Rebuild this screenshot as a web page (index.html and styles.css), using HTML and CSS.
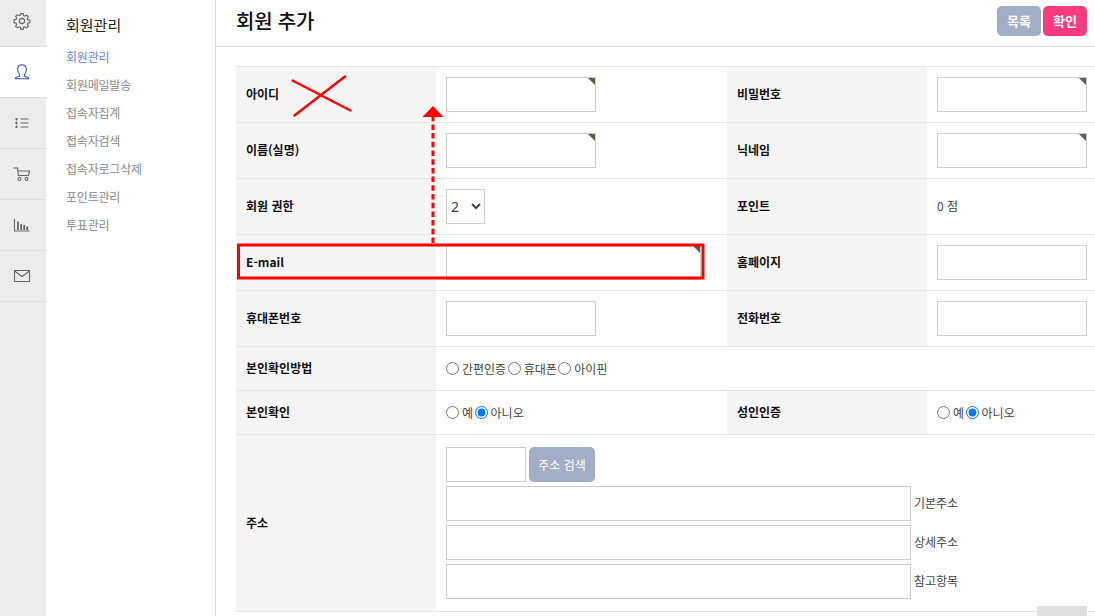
FILE: index.html
```html
<!DOCTYPE html>
<html lang="ko">
<head>
<meta charset="utf-8">
<title>회원 추가</title>
<link rel="stylesheet" href="styles.css">
</head>
<body>
<div class="app">
  <nav class="rail">
    <a class="rail-item"><svg class="ic" viewBox="0 0 16 16"><path d="M6.8.6h2.400l.4 2 1.300.6 1.800-1.100 1.700 1.700-1.100 1.800.6 1.300 2 .4v2.400l-2 .4-.6 1.300 1.100 1.800-1.700 1.700-1.800-1.100-1.300.6-.4 2H6.800l-.4-2-1.300-.6-1.800 1.100-1.700-1.700 1.100-1.800-.6-1.300-2-.4V6.800l2-.4.6-1.300-1.100-1.800 1.700-1.700 1.800 1.100 1.300-.6z"/><circle cx="8" cy="8" r="2.600"/></svg></a>
    <a class="rail-item active"><svg class="ic" viewBox="0 0 16 16"><path d="M5.500 10.500C3.800 8.500 3.400 6.800 3.700 4.800 4 2.200 6 .8 8 .8s4 1.400 4.300 4c.3 2-.1 3.700-1.800 5.700v1.700l3.500 1.200c.6.200.8.800.8 1.300H1.200c0-.5.2-1.100.8-1.300l3.500-1.200z"/></svg></a>
    <a class="rail-item"><svg class="ic" viewBox="0 0 16 16"><path d="M6.500 4h8M6.500 8h8M6.500 12h8"/><path class="dots" d="M1.500 3h2v2h-2zM2 5.500h1v1H2zM1.500 7h2v2h-2zM2 9.500h1v1H2zM1.500 11h2v2h-2z"/></svg></a>
    <a class="rail-item"><svg class="ic" viewBox="0 0 16 16"><path d="M-.5 2h4l1 8M3.800 5h11.700l-1 4.500h-10"/><circle cx="5.500" cy="13" r="1.500"/><circle cx="12.500" cy="13" r="1.500"/></svg></a>
    <a class="rail-item"><svg class="ic" viewBox="0 0 16 16"><path d="M.5 2v12h15"/><path class="dots" d="M3 4.500h1.800v8.500H3zM6.300 7h1.800v6H6.300zM9.300 8h1.800v5H9.300zM12.300 9.500h1.800V13h-1.800z"/></svg></a>
    <a class="rail-item"><svg class="ic" viewBox="0 0 16 16"><path d="M.5 2.500h15v11H.5zM.5 3l7.500 5.500L15.500 3"/></svg></a>
  </nav>
  <aside class="side">
    <h2 class="side-title">회원관리</h2>
    <ul class="side-list">
      <li class="current">회원관리</li>
      <li>회원메일발송</li>
      <li>접속자집계</li>
      <li>접속자검색</li>
      <li>접속자로그삭제</li>
      <li>포인트관리</li>
      <li>투표관리</li>
    </ul>
  </aside>
  <main class="main">
    <header class="head">
      <h1 class="title">회원 추가</h1>
      <div class="actions">
        <button class="btn gray" type="button">목록</button>
        <button class="btn pink" type="button">확인</button>
      </div>
    </header>
    <div class="body">
      <table class="form">
        <colgroup><col class="c-th"><col class="c-td"><col class="c-th"><col class="c-td2"></colgroup>
        <tr class="r56">
          <th>아이디</th>
          <td><span class="req"><input class="inp"></span></td>
          <th>비밀번호</th>
          <td><span class="req"><input class="inp"></span></td>
        </tr>
        <tr class="r56">
          <th>이름(실명)</th>
          <td><span class="req"><input class="inp"></span></td>
          <th>닉네임</th>
          <td><span class="req"><input class="inp"></span></td>
        </tr>
        <tr class="r56">
          <th>회원 권한</th>
          <td><select class="sel"><option>2</option></select></td>
          <th>포인트</th>
          <td class="txt">0 점</td>
        </tr>
        <tr class="r56">
          <th>E-mail</th>
          <td><span class="req"><input class="inp wide"></span></td>
          <th>홈페이지</th>
          <td><input class="inp"></td>
        </tr>
        <tr class="r56">
          <th>휴대폰번호</th>
          <td><input class="inp"></td>
          <th>전화번호</th>
          <td><input class="inp"></td>
        </tr>
        <tr class="r44">
          <th>본인확인방법</th>
          <td colspan="3" class="txt"><label class="opt"><input class="rad" type="radio" name="m">간편인증</label><label class="opt"><input class="rad" type="radio" name="m">휴대폰</label><label class="opt"><input class="rad" type="radio" name="m">아이핀</label></td>
        </tr>
        <tr class="r44">
          <th>본인확인</th>
          <td class="txt"><label class="opt"><input class="rad" type="radio" name="a">예</label><label class="opt"><input class="rad" type="radio" name="a" checked>아니오</label></td>
          <th>성인인증</th>
          <td class="txt"><label class="opt"><input class="rad" type="radio" name="b">예</label><label class="opt"><input class="rad" type="radio" name="b" checked>아니오</label></td>
        </tr>
        <tr>
          <th>주소</th>
          <td colspan="3" class="addr">
            <div class="addr-line"><input class="inp zip"><button class="btn-search" type="button">주소 검색</button></div>
            <div class="addr-line"><input class="inp long"><span class="addr-label">기본주소</span></div>
            <div class="addr-line"><input class="inp long"><span class="addr-label">상세주소</span></div>
            <div class="addr-line"><input class="inp long"><span class="addr-label">참고항목</span></div>
          </td>
        </tr>
      </table>
      <div class="tail"></div>
    </div>
  </main>
  <svg class="marks" width="1095" height="616" viewBox="0 0 1095 616">
    <path class="m-x" d="M292.500 80.500 350.500 110.500M345 76.500 294.500 115.500"/>
    <path class="m-box" d="M238.500 245h464.500v33H238.500z"/>
    <path class="m-dash" d="M433 243V117"/>
    <path class="m-tri" d="M433 106l10.500 11h-21z"/>
  </svg>
</div>
</body>
</html>
```

FILE: styles.css
```css
* { box-sizing: border-box; }
html, body { margin: 0; padding: 0; height: 100%; overflow: hidden; background: #fff; }
body { font-family: "Noto Sans CJK KR", "Noto Sans", "Liberation Sans", sans-serif; font-size: 12px; color: #333; }
.app { position: relative; display: flex; width: 1095px; height: 616px; overflow: hidden; }

.rail { flex: 0 0 46px; background: #ececec; }
.rail-item { display: flex; align-items: center; justify-content: center; height: 51px; padding-right: 3px; border-bottom: 1px solid #ddd; }
.rail-item:first-child { height: 47px; padding-bottom: 4px; }
.rail-item.active { background: #fff; }
.ic { width: 16px; height: 16px; fill: none; stroke: #666; stroke-width: 1.1; overflow: visible; }
.ic .dots { fill: #666; stroke: none; }
.active .ic { stroke: #3f51b5; }

.side { flex: 0 0 170px; border-right: 1px solid #ddd; padding: 14px 20px; }
.side-title { margin: 0 0 7px; font-size: 15px; line-height: 22px; font-weight: 400; color: #222; }
.side-list { list-style: none; margin: 0; padding: 0; }
.side-list li { height: 28px; line-height: 28px; color: #8a8a8a; letter-spacing: -.2px; }
.side-list li.current { color: #6b7ff0; }

.main { flex: 1; min-width: 0; }
.head { display: flex; justify-content: space-between; align-items: flex-start; height: 47px; border-bottom: 1px solid #ddd; padding: 6px 8px 0 20px; }
.title { margin: 0; font-size: 20px; line-height: 30px; font-weight: 500; color: #111; letter-spacing: -.2px; }
.actions { display: flex; gap: 2px; }
.btn { width: 44px; height: 30px; border: 0; border-radius: 5px; padding: 0 0 2px; color: #fff; font: 700 13px "Noto Sans CJK KR", sans-serif; }
.btn.gray { background: #a2adc6; }
.btn.pink { background: #fb3b80; }

.body { padding: 19px 0 0 20px; }
.form { table-layout: fixed; width: 861px; border-collapse: collapse; border-top: 1px solid #e4e4e4; }
.c-th { width: 200px; }
.c-td { width: 291px; }
.c-td2 { width: 170px; }
.form tr { border-bottom: 1px solid #e4e4e4; }
.form th { background: #f5f5f5; padding: 0 10px 2px; text-align: left; font-weight: 700; color: #111; }
.form td { padding: 0 10px; color: #444; }
.form td.txt { padding-bottom: 2px; }
.r56 { height: 56px; }
.r44 { height: 44px; }

.req { position: relative; display: inline-block; vertical-align: middle; }
.req::after { content: ""; position: absolute; top: 1px; right: 1px; border-style: solid; border-width: 0 7px 7px 0; border-color: transparent #5d5d4f transparent transparent; }
.inp { display: block; width: 150px; height: 35px; border: 1px solid #ccc; background: #fff; padding: 0; }
.inp.wide { width: 255px; }
.sel { display: block; width: 39px; height: 35px; border: 1px solid #ccc; background: #fff; padding: 0; font: 14px "Noto Sans", sans-serif; color: #444; }
.opt { display: inline-flex; align-items: center; vertical-align: middle; margin-right: 1.5px; }
.rad { width: 13px; height: 13px; margin: 0 3px 0 0; }

.form td.addr { padding-top: 12px; padding-bottom: 12px; }
.addr-line { display: flex; align-items: center; gap: 3px; margin-bottom: 4px; }
.addr-line:last-child { margin-bottom: 0; }
.inp.zip { width: 80px; }
.inp.long { width: 465px; }
.btn-search { height: 35px; width: 66px; border: 0; border-radius: 5px; padding: 0; background: #a2adc6; color: #fff; font: 12px "Noto Sans CJK KR", sans-serif; }
.addr-label { color: #444; padding-bottom: 2px; }

.tail { width: 50px; height: 11px; margin: -6px 0 0 801px; background: #e0e0e0; position: relative; }

.marks { position: absolute; left: 0; top: 0; pointer-events: none; fill: none; }
.m-x { stroke: #f00; stroke-width: 2.500; stroke-linecap: round; }
.m-box { stroke: #f00; stroke-width: 3; }
.m-dash { stroke: #f00; stroke-width: 3; stroke-dasharray: 5.500 3.200; }
.m-tri { fill: #f00; }
```
